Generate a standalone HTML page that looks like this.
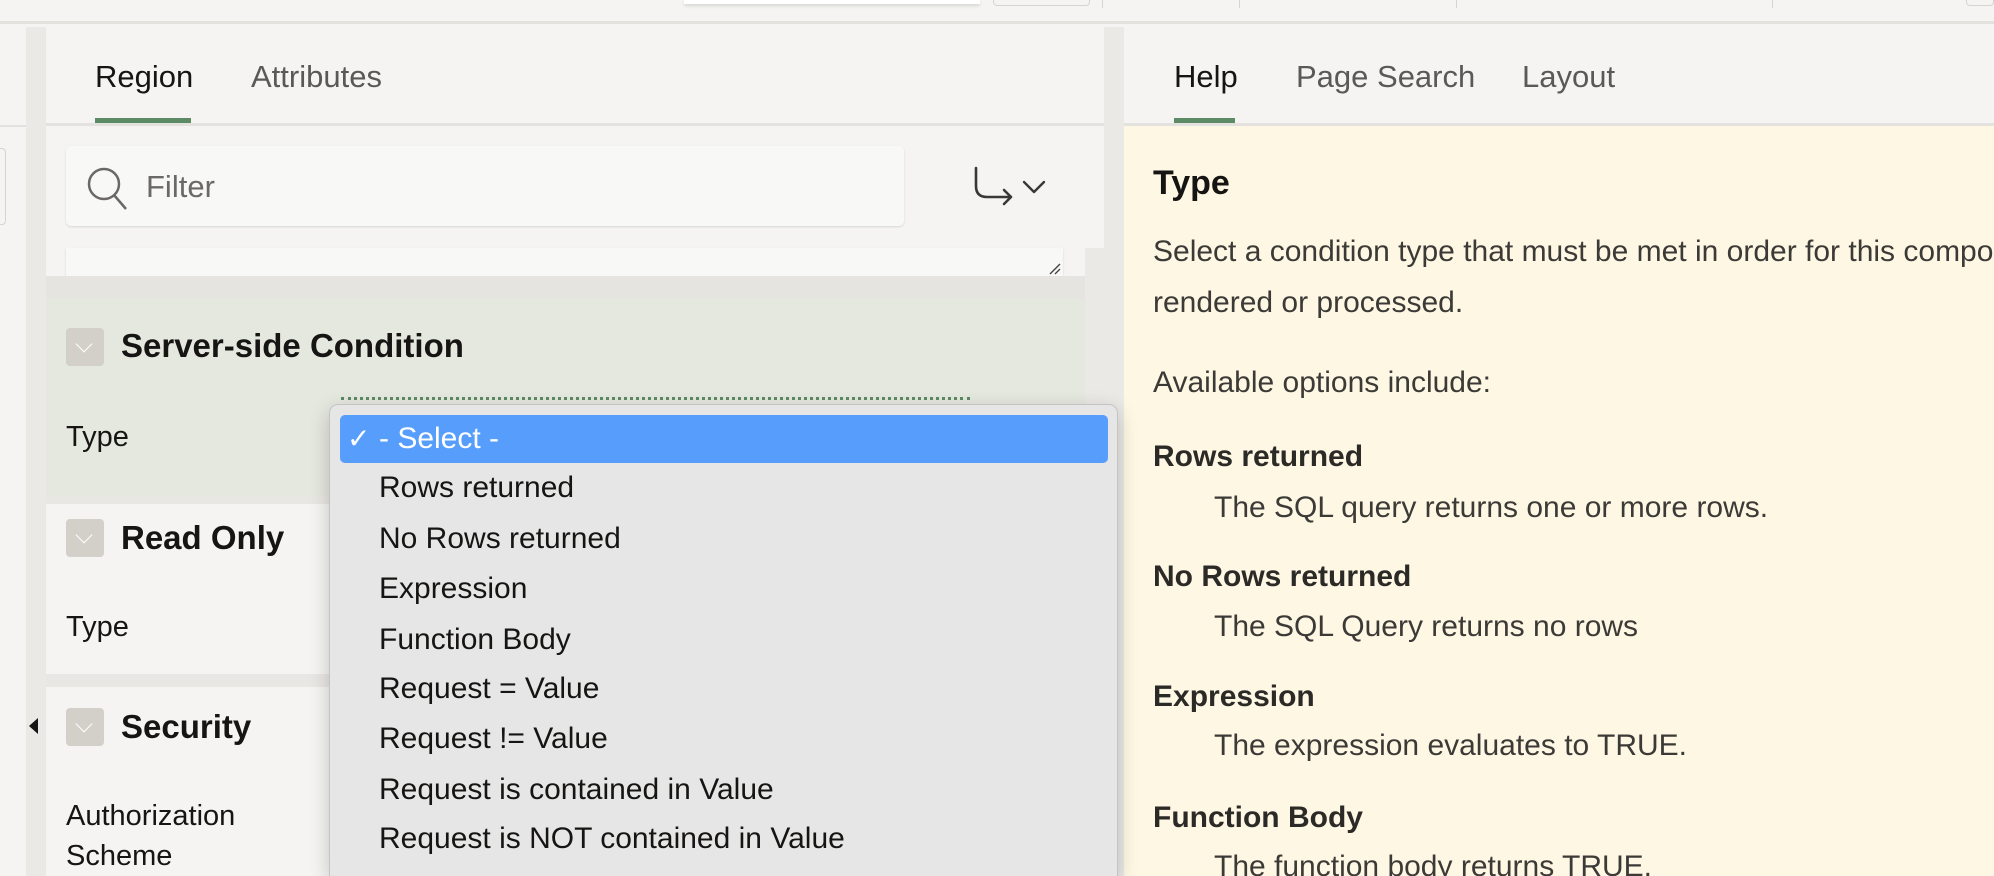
<!DOCTYPE html>
<html style="width:1994px;height:876px;overflow:hidden"><head><meta charset="utf-8"><style>
*{margin:0;padding:0;box-sizing:border-box}
body{width:1994px;height:876px;overflow:hidden;background:#f5f4f2;font-family:"Liberation Sans",sans-serif;position:relative;color:#161513}
.a{position:absolute;white-space:nowrap}
.t{font-size:29px;line-height:40px}
.tb{font-size:31px;line-height:40px}
.h{font-size:33px;font-weight:bold;line-height:40px}
.box{position:absolute;width:38px;height:38px;background:#d3d0ca;border-radius:4px}
.box:after{content:"";position:absolute;left:12px;top:10px;width:11px;height:11px;border-right:1.5px solid #fff;border-bottom:1.5px solid #fff;transform:rotate(45deg)}
.it{position:absolute;left:379px;font-size:30px;line-height:40px;color:#161513;white-space:nowrap}
.r{font-size:30px;line-height:40px;color:#3c3a37}
.rb{font-size:30px;line-height:40px;font-weight:bold;color:#2c2a27}
</style></head><body>
<div class="a" style="left:0;top:0;width:1994px;height:24px;background:#f5f4f2;border-bottom:3px solid #e4e2de"></div>
<div class="a" style="left:684px;top:0;width:296px;height:4px;background:#fff;box-shadow:0 2px 3px rgba(0,0,0,.12)"></div>
<div class="a" style="left:993px;top:0;width:97px;height:6px;border:1px solid #d6d4cf;border-top:0;border-radius:0 0 4px 4px"></div>
<div class="a" style="left:1966px;top:0;width:28px;height:6px;border:1px solid #d6d4cf;border-top:0;border-radius:0 0 4px 4px"></div>
<div class="a" style="left:1102px;top:0;width:1px;height:8px;background:#d6d4cf"></div>
<div class="a" style="left:1239px;top:0;width:1px;height:8px;background:#d6d4cf"></div>
<div class="a" style="left:1456px;top:0;width:1px;height:8px;background:#d6d4cf"></div>
<div class="a" style="left:1772px;top:0;width:1px;height:8px;background:#d6d4cf"></div>

<div class="a" style="left:0;top:27px;width:26px;height:849px;background:#f5f4f2"></div>
<div class="a" style="left:0;top:125px;width:26px;height:2px;background:#e4e2de"></div>
<div class="a" style="left:0;top:148px;width:6px;height:77px;border:1px solid #d6d4cf;border-left:0;border-radius:0 4px 4px 0"></div>
<div class="a" style="left:26px;top:27px;width:20px;height:849px;background:#ebe9e5"></div>
<div class="a" style="left:29px;top:718px;width:0;height:0;border-top:8px solid transparent;border-bottom:8px solid transparent;border-right:9px solid #161513"></div>

<div class="a" style="left:46px;top:27px;width:1058px;height:849px;background:#f5f4f2"></div>
<div class="a tb" style="left:95px;top:57px;color:#161513">Region</div>
<div class="a tb" style="left:251px;top:57px;color:#5b5955">Attributes</div>
<div class="a" style="left:95px;top:118px;width:96px;height:5px;background:#5c8a64"></div>
<div class="a" style="left:46px;top:123px;width:1058px;height:3px;background:#e4e2de"></div>
<div class="a" style="left:66px;top:146px;width:838px;height:80px;background:#f8f8f6;border-radius:5px;box-shadow:0 1px 2px rgba(0,0,0,.12)"></div>
<svg class="a" style="left:84px;top:166px" width="46" height="46" viewBox="0 0 46 46"><circle cx="20" cy="18" r="15" fill="none" stroke="#6b6965" stroke-width="2.5"/><path d="M30 29 L42 43" stroke="#6b6965" stroke-width="2.5"/></svg>
<div class="a tb" style="left:146px;top:167px;color:#6b6965">Filter</div>
<svg class="a" style="left:966px;top:160px" width="90" height="60" viewBox="0 0 90 60"><path d="M10 8 V26 Q10 37 21 37 H45 M38 30 L45 37 L38 44" fill="none" stroke="#3a3835" stroke-width="2.6" stroke-linecap="round" stroke-linejoin="round"/><path d="M58 22 L68 32 L78 22" fill="none" stroke="#3a3835" stroke-width="2.4" stroke-linecap="round" stroke-linejoin="round"/></svg>
<div class="a" style="left:1085px;top:248px;width:19px;height:628px;background:#ebe9e5"></div>
<div class="a" style="left:46px;top:248px;width:1039px;height:28px;background:#f5f4f2"></div>
<div class="a" style="left:66px;top:248px;width:997px;height:28px;background:#f8f8f6;box-shadow:0 1px 2px rgba(0,0,0,.12)"></div>
<svg class="a" style="left:1046px;top:260px" width="16" height="16"><path d="M4 14 L14 4 M9 14 L14 9" stroke="#444" stroke-width="1.4"/></svg>
<div class="a" style="left:46px;top:276px;width:1039px;height:22px;background:#e6e4e0"></div>
<div class="a" style="left:46px;top:298px;width:1039px;height:198px;background:#e5e8df"></div>
<div class="box" style="left:66px;top:328px"></div>
<div class="a h" style="left:121px;top:326px">Server-side Condition</div>
<div class="a t" style="left:66px;top:417px">Type</div>
<div class="a" style="left:341px;top:397px;width:629px;height:0;border-top:3px dotted #5c8a64"></div>
<div class="a" style="left:46px;top:496px;width:1039px;height:8px;background:#e9e7e3"></div>
<div class="a" style="left:46px;top:504px;width:1039px;height:170px;background:#f5f4f2"></div>
<div class="box" style="left:66px;top:519px"></div>
<div class="a h" style="left:121px;top:518px">Read Only</div>
<div class="a t" style="left:66px;top:607px">Type</div>
<div class="a" style="left:46px;top:674px;width:1039px;height:13px;background:#e9e7e3"></div>
<div class="a" style="left:46px;top:687px;width:1039px;height:189px;background:#f5f4f2"></div>
<div class="box" style="left:66px;top:708px"></div>
<div class="a h" style="left:121px;top:707px">Security</div>
<div class="a t" style="left:66px;top:796px">Authorization</div>
<div class="a t" style="left:66px;top:836px">Scheme</div>

<div class="a" style="left:1104px;top:27px;width:20px;height:849px;background:#ebe9e5"></div>

<div class="a" style="left:1124px;top:27px;width:870px;height:98px;background:#f5f4f2"></div>
<div class="a tb" style="left:1174px;top:57px">Help</div>
<div class="a tb" style="left:1296px;top:57px;color:#5b5955">Page Search</div>
<div class="a tb" style="left:1522px;top:57px;color:#5b5955">Layout</div>
<div class="a" style="left:1174px;top:118px;width:61px;height:5px;background:#5c8a64"></div>
<div class="a" style="left:1124px;top:123px;width:870px;height:3px;background:#e4e2de"></div>
<div class="a" style="left:1124px;top:126px;width:870px;height:750px;background:#fdf7e3;overflow:hidden">
 <div class="a" style="left:29px;top:37px;font-size:34px;font-weight:bold;line-height:40px;color:#161513">Type</div>
 <div class="a r" style="left:29px;top:106px">Select a condition type that must be met in order for this component to be</div>
 <div class="a r" style="left:29px;top:157px">rendered or processed.</div>
 <div class="a r" style="left:29px;top:237px">Available options include:</div>
 <div class="a rb" style="left:29px;top:311px">Rows returned</div>
 <div class="a r" style="left:90px;top:362px">The SQL query returns one or more rows.</div>
 <div class="a rb" style="left:29px;top:431px">No Rows returned</div>
 <div class="a r" style="left:90px;top:481px">The SQL Query returns no rows</div>
 <div class="a rb" style="left:29px;top:551px">Expression</div>
 <div class="a r" style="left:90px;top:600px">The expression evaluates to TRUE.</div>
 <div class="a rb" style="left:29px;top:672px">Function Body</div>
 <div class="a r" style="left:90px;top:721px">The function body returns TRUE.</div>
</div>

<div class="a" style="left:329px;top:404px;width:789px;height:472px;background:#e6e6e6;border:1px solid #c4c4c4;border-bottom:0;border-radius:9px 9px 0 0;box-shadow:0 6px 20px rgba(0,0,0,.2)"></div>
<div class="a" style="left:340px;top:415px;width:768px;height:48px;background:#579dfb;border-radius:5px"></div>
<div class="a" style="left:347px;top:419px;font-size:28px;line-height:40px;color:#fff">✓</div>
<div class="a" style="left:379px;top:419px;font-size:30px;line-height:40px;color:#fff">- Select -</div>
<div class="it" style="top:468px">Rows returned</div>
<div class="it" style="top:519px">No Rows returned</div>
<div class="it" style="top:569px">Expression</div>
<div class="it" style="top:620px">Function Body</div>
<div class="it" style="top:669px">Request = Value</div>
<div class="it" style="top:719px">Request != Value</div>
<div class="it" style="top:770px">Request is contained in Value</div>
<div class="it" style="top:819px">Request is NOT contained in Value</div>
</body></html>
